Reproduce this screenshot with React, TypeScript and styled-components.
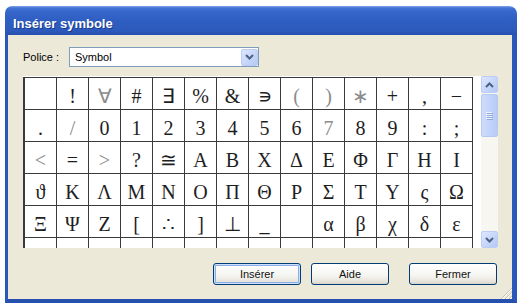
import styled, { createGlobalStyle } from "styled-components";

const GlobalStyle = createGlobalStyle`
  html, body {
    margin: 0;
    padding: 0;
    background: #fff;
  }
  body {
    font-family: "Liberation Sans", Arial, sans-serif;
    font-size: 11px;
    color: #000;
  }
`;

const Window = styled.div`
  width: 512px;
  margin: 6px 0 0 5px;
  display: flex;
  flex-direction: column;
`;

const TitleBar = styled.div`
  height: 29px;
  box-sizing: border-box;
  padding: 10px 0 0 8px;
  border-radius: 7px 8px 0 0;
  background: linear-gradient(
    to bottom,
    #7ea4e8 0,
    #4373d4 2px,
    #3667cb 5px,
    #2f5ec2 50%,
    #2c5abc 85%,
    #274fae 100%
  );
  color: #fff;
  font-family: "Liberation Sans", Arial, sans-serif;
  font-weight: bold;
  font-size: 13px;
  line-height: 15px;
  text-shadow: 1px 1px 0 rgba(12, 32, 92, 0.55);
`;

const Body = styled.div`
  position: relative;
  background: #ece9d8;
  border-left: 3px solid #2b57b9;
  border-right: 5px solid #2b57b9;
  border-bottom: 4px solid #2550ae;
  padding: 12px 14px 14px 15px;
  display: flex;
  flex-direction: column;
`;

const FontRow = styled.div`
  display: flex;
  align-items: center;
  height: 20px;
`;

const Label = styled.span`
  width: 46px;
  flex-shrink: 0;
`;

const Combo = styled.div`
  width: 190px;
  height: 20px;
  box-sizing: border-box;
  border: 1px solid #7f9db9;
  background: #fff;
  display: flex;
  align-items: center;
  padding-left: 5px;
`;

const ComboText = styled.span`
  flex: 1;
`;

const ArrowButton = styled.div`
  width: 17px;
  height: 17px;
  box-sizing: border-box;
  border: 1px solid #bcccf3;
  border-radius: 2px;
  background: linear-gradient(135deg, #dde7fd 0%, #c6d6fa 55%, #b4c8f4 100%);
  display: flex;
  align-items: center;
  justify-content: center;
  flex-shrink: 0;
`;

const SymbolArea = styled.div`
  margin-top: 9px;
  height: 172px;
  background: #fff;
  display: flex;
  overflow: hidden;
`;

const Grid = styled.div`
  display: grid;
  grid-template-columns: repeat(14, 32px);
  grid-auto-rows: 32px;
  border-left: 2px solid #3a3a3a;
  border-top: 1px solid #3a3a3a;
  margin-top: 1px;
  align-self: flex-start;
`;

const Cell = styled.div<{ $light?: boolean }>`
  box-sizing: border-box;
  border-right: 1px solid #3a3a3a;
  border-bottom: 1px solid #3a3a3a;
  overflow: hidden;
  text-align: center;
  font-family: "Liberation Serif", "Times New Roman", serif;
  font-size: 20px;
  line-height: 36px;
  color: ${(p) => (p.$light ? "#8c8c8c" : "#1e1e1e")};
`;

const ScrollBar = styled.div`
  width: 17px;
  margin-left: auto;
  display: flex;
  flex-direction: column;
  background: #f7f6f1;
`;

const Thumb = styled.div`
  margin-top: 1px;
  height: 43px;
  box-sizing: border-box;
  border: 1px solid #b6c9f3;
  border-radius: 2px;
  background: linear-gradient(to right, #cfdcfb 0%, #c3d4fa 50%, #b8cbf6 100%);
  display: flex;
  align-items: center;
  justify-content: center;
`;

const Track = styled.div`
  flex: 1;
`;

const ButtonRow = styled.div`
  margin-top: 15px;
  margin-right: 1px;
  display: flex;
  justify-content: flex-end;
`;

const Button = styled.button<{ $width: number; $space: number; $default?: boolean }>`
  width: ${(p) => p.$width}px;
  height: 22px;
  margin-left: ${(p) => p.$space}px;
  padding: 0;
  border: 1px solid #003c74;
  border-radius: 3px;
  background: linear-gradient(to bottom, #ffffff 0%, #f4f4f0 60%, #e4e1d8 90%, #d6d0c5 100%);
  font-family: "Liberation Sans", Arial, sans-serif;
  font-size: 11px;
  font-weight: normal;
  color: #111;
  box-shadow: ${(p) =>
    p.$default ? "inset 0 0 0 1px #cfe0fb, inset 0 0 0 2px #8aaeea" : "none"};
`;

const Grip = styled.svg`
  position: absolute;
  right: 0;
  bottom: 0;
`;

// The sixth row is scrolled mostly out of view; only its top edge shows.
const rows: string[][] = [
  ["", "!", "∀", "#", "∃", "%", "&", "∍", "(", ")", "∗", "+", ",", "−"],
  [".", "/", "0", "1", "2", "3", "4", "5", "6", "7", "8", "9", ":", ";"],
  ["<", "=", ">", "?", "≅", "Α", "Β", "Χ", "Δ", "Ε", "Φ", "Γ", "Η", "Ι"],
  ["ϑ", "Κ", "Λ", "Μ", "Ν", "Ο", "Π", "Θ", "Ρ", "Σ", "Τ", "Υ", "ς", "Ω"],
  ["Ξ", "Ψ", "Ζ", "[", "∴", "]", "⊥", "_", "", "α", "β", "χ", "δ", "ε"],
  ["", "", "", "", "", "", "", "", "", "", "", "", "", ""],
];

const lightGlyphs = ["∀", "/", "<", ">", "(", ")", "∗", "7"];

function Chevron({ up }: { up?: boolean }) {
  return (
    <svg width="9" height="6" viewBox="0 0 9 6">
      <polyline
        points={up ? "1,5 4.5,1.5 8,5" : "1,1 4.5,4.5 8,1"}
        fill="none"
        stroke="#4d6185"
        strokeWidth="2"
      />
    </svg>
  );
}

function App() {
  return (
    <>
      <GlobalStyle />
      <Window>
        <TitleBar>Insérer symbole</TitleBar>
        <Body>
          <FontRow>
            <Label>Police :</Label>
            <Combo>
              <ComboText>Symbol</ComboText>
              <ArrowButton>
                <Chevron />
              </ArrowButton>
            </Combo>
          </FontRow>

          <SymbolArea>
            <Grid>
              {rows.flat().map((ch, i) => (
                <Cell key={i} $light={lightGlyphs.includes(ch)}>
                  {ch}
                </Cell>
              ))}
            </Grid>
            <ScrollBar>
              <ArrowButton>
                <Chevron up />
              </ArrowButton>
              <Thumb>
                <svg width="7" height="8" viewBox="0 0 7 8">
                  {[0, 2, 4, 6].map((y) => (
                    <g key={y}>
                      <line x1="0" y1={y + 0.5} x2="6" y2={y + 0.5} stroke="#eef3fe" />
                      <line x1="1" y1={y + 1.5} x2="7" y2={y + 1.5} stroke="#8ea8dc" />
                    </g>
                  ))}
                </svg>
              </Thumb>
              <Track />
              <ArrowButton>
                <Chevron />
              </ArrowButton>
            </ScrollBar>
          </SymbolArea>

          <ButtonRow>
            <Button $width={88} $space={0} $default>
              Insérer
            </Button>
            <Button $width={78} $space={10}>
              Aide
            </Button>
            <Button $width={88} $space={20}>
              Fermer
            </Button>
          </ButtonRow>

          <Grip width="12" height="12" viewBox="0 0 12 12">
            {[3, 7, 11].map((o) => (
              <g key={o}>
                <line x1={12 - o} y1="12" x2="12" y2={12 - o} stroke="#c5c2b2" />
                <line x1={13 - o} y1="12" x2="12" y2={13 - o} stroke="#fff" />
              </g>
            ))}
          </Grip>
        </Body>
      </Window>
    </>
  );
}

export default App;
